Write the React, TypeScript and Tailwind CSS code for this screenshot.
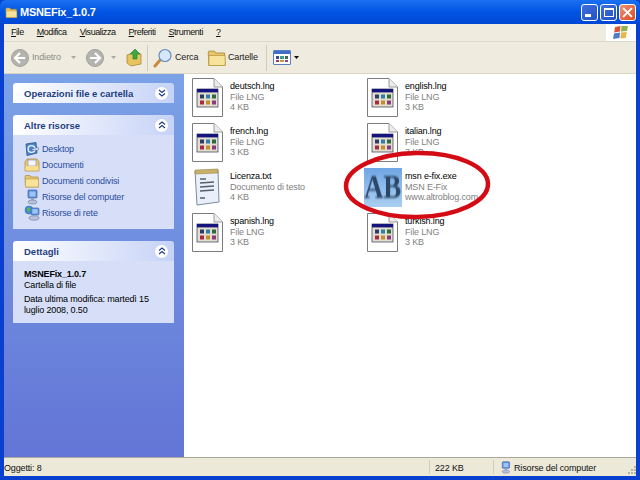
import React from 'react';

const Folder: React.FC<{ className?: string }> = ({ className }) => (
  <svg viewBox="0 0 16 16" className={className}>
    <path d="M1 4 L1.5 2.5 L6 2.5 L7 4 L14 4 L14.5 14 L1.5 14 Z" fill="#e8c66a" stroke="#a88a3a" strokeWidth="0.7" />
    <path d="M1.5 6 L14.5 6 L14.5 14 L1.5 14 Z" fill="#f8e39a" stroke="#b8983f" strokeWidth="0.6" />
  </svg>
);

const Computer: React.FC<{ className?: string }> = ({ className }) => (
  <svg viewBox="0 0 16 16" className={className}>
    <rect x="4" y="1" width="9" height="8" rx="1" fill="#5c8fe0" stroke="#3a5fa8" strokeWidth="0.7" />
    <rect x="5.5" y="2.5" width="6" height="5" fill="#9cc4f4" />
    <path d="M7 9 L10 9 L10 11 L7 11 Z" fill="#9aa8c8" />
    <ellipse cx="8.5" cy="13" rx="4.5" ry="2" fill="#b8c0dc" stroke="#6c7aa4" strokeWidth="0.6" />
  </svg>
);

const Network: React.FC<{ className?: string }> = ({ className }) => (
  <svg viewBox="0 0 16 16" className={className}>
    <circle cx="5" cy="5" r="4" fill="#3f8fd8" stroke="#2c5f9c" strokeWidth="0.5" />
    <path d="M3 3 L6 2.5 L7 5 L4 7 Z" fill="#5fb45a" />
    <rect x="7" y="3" width="8" height="7" rx="1" fill="#5c8fe0" stroke="#3a5fa8" strokeWidth="0.6" />
    <rect x="8.3" y="4.2" width="5.4" height="4.4" fill="#9cc4f4" />
    <ellipse cx="10" cy="13" rx="5" ry="2.2" fill="#b8c0dc" stroke="#6c7aa4" strokeWidth="0.6" />
  </svg>
);

const DesktopIcon: React.FC<{ className?: string }> = ({ className }) => (
  <svg viewBox="0 0 16 16" className={className}>
    <path d="M2 3 L12 1.5 L13 12 L3 14.5 Z" fill="#4f86c8" stroke="#2a4f8c" strokeWidth="0.8" />
    <circle cx="7.5" cy="8" r="3.4" fill="none" stroke="#e8f0fc" strokeWidth="1.4" />
    <path d="M8 8 L14.5 6.5 L14.5 9 L8 9.5 Z" fill="#dfe8f8" stroke="#2a4f8c" strokeWidth="0.4" />
  </svg>
);

const DocsIcon: React.FC<{ className?: string }> = ({ className }) => (
  <svg viewBox="0 0 16 16" className={className}>
    <path d="M1 5 L3 2 L13 2 L15 5 L15 14 L1 14 Z" fill="#edc968" stroke="#a88a3a" strokeWidth="0.7" />
    <rect x="4" y="3" width="8" height="6" fill="#f4f6fc" stroke="#7c8cb4" strokeWidth="0.6" />
    <path d="M1.5 9 L14.5 9 L14.5 13.5 L1.5 13.5 Z" fill="#f8df90" />
  </svg>
);

const LngIcon: React.FC = () => (
  <svg viewBox="0 0 31 39" className="w-[31px] h-[39px] shrink-0">
    <path d="M0.5 0.5 L22 0.5 L30.5 9 L30.5 38.5 L0.5 38.5 Z" fill="#fff" stroke="#7c7c7c" />
    <path d="M22 0.5 L22 9 L30.5 9" fill="#ececec" stroke="#9a9a9a" />
    <rect x="5" y="11" width="21" height="18" fill="#e4dfcc" stroke="#33335a" strokeWidth="0.7" />
    <rect x="5" y="11" width="21" height="3.4" fill="#14147c" />
    {[0, 1, 2].map((col) => (
      <React.Fragment key={col}>
        <rect x={8 + col * 6} y="16.5" width="4" height="4" fill={['#2d3a70', '#2f7fa8', '#2d6a40'][col]} />
        <rect x={8 + col * 6} y="22.5" width="4" height="4" fill={['#a82848', '#c09030', '#8a3a80'][col]} />
      </React.Fragment>
    ))}
  </svg>
);

const TxtIcon: React.FC = () => (
  <svg viewBox="0 0 31 39" className="w-[31px] h-[39px] shrink-0">
    <path d="M3 3 L26 2 L27 34 L5 37 Z" fill="#eaf0fa" stroke="#7c8aa0" />
    <path d="M3 2 L26 1 L26 5 L3 6 Z" fill="#c8b068" stroke="#8c7a40" strokeWidth="0.5" />
    <path d="M8 11 L14 11 M8 15 L22 14 M8 19 L22 18 M8 23 L22 22 M8 30 L13 30" stroke="#55606c" strokeWidth="1.4" />
  </svg>
);

const ABIcon: React.FC = () => (
  <div className="w-[38px] h-[39px] shrink-0 bg-gradient-to-b from-[#6fa6e4] via-[#8fbcec] to-[#a9cdf0] flex items-center justify-center overflow-hidden">
    <span className="font-['Liberation_Serif',serif] font-bold text-[27px] leading-none text-[#2b4666] scale-y-125 blur-[0.7px]">AB</span>
  </div>
);

const Chevron: React.FC<{ up?: boolean }> = ({ up }) => (
  <div className="w-[15px] h-[15px] rounded-full bg-white border border-[#c4cff0] flex items-center justify-center shrink-0">
    <svg viewBox="0 0 8 8" className={up ? 'w-2 h-2' : 'w-2 h-2 rotate-180'}>
      <path d="M1 3.5 L4 1 L7 3.5 M1 7 L4 4.5 L7 7" fill="none" stroke="#1c3a80" strokeWidth="1.1" />
    </svg>
  </div>
);

const PanelHeader: React.FC<{ title: string; up?: boolean }> = ({ title, up }) => (
  <div className="h-5 pl-[11px] pr-[5px] flex items-center justify-between rounded-t-[3px] bg-gradient-to-r from-white to-[#c6d3f7]">
    <span className="pt-[1px] font-bold text-[#1e3f80] text-[9.5px] tracking-[0px]">{title}</span>
    <Chevron up={up} />
  </div>
);

const tiles = [
  { name: 'deutsch.lng', kind: 'File LNG', size: '4 KB', icon: <LngIcon /> },
  { name: 'english.lng', kind: 'File LNG', size: '3 KB', icon: <LngIcon /> },
  { name: 'french.lng', kind: 'File LNG', size: '3 KB', icon: <LngIcon /> },
  { name: 'italian.lng', kind: 'File LNG', size: '3 KB', icon: <LngIcon /> },
  { name: 'Licenza.txt', kind: 'Documento di testo', size: '4 KB', icon: <TxtIcon /> },
  { name: 'msn e-fix.exe', kind: 'MSN E-Fix', size: 'www.altroblog.com', icon: <ABIcon /> },
  { name: 'spanish.lng', kind: 'File LNG', size: '3 KB', icon: <LngIcon /> },
  { name: 'turkish.lng', kind: 'File LNG', size: '3 KB', icon: <LngIcon /> },
];

const links = [
  { label: 'Desktop', icon: <DesktopIcon className="w-4 h-4" /> },
  { label: 'Documenti', icon: <DocsIcon className="w-4 h-4" /> },
  { label: 'Documenti condivisi', icon: <Folder className="w-4 h-4" /> },
  { label: 'Risorse del computer', icon: <Computer className="w-4 h-4" /> },
  { label: 'Risorse di rete', icon: <Network className="w-4 h-4" /> },
];

const menus = [
  ['F', 'ile'],
  ['M', 'odifica'],
  ['V', 'isualizza'],
  ['P', 'referiti'],
  ['S', 'trumenti'],
  ['?', ''],
];

const ArrowCircle: React.FC<{ flip?: boolean }> = ({ flip }) => (
  <svg viewBox="0 0 18 18" className={flip ? 'w-[18px] h-[18px] shrink-0 rotate-180' : 'w-[18px] h-[18px] shrink-0'}>
    <circle cx="9" cy="9" r="8.5" fill="#b4b4ae" stroke="#a0a09a" />
    <path d="M9 4 L4 9 L9 14 M4.5 9 L14 9" fill="none" stroke="#fff" strokeWidth="2.2" />
  </svg>
);

const DownTick: React.FC<{ dark?: boolean }> = ({ dark }) => (
  <svg viewBox="0 0 5 3" className="w-[5px] h-[3px] shrink-0">
    <path d="M0 0 L5 0 L2.5 3 Z" fill={dark ? '#111' : '#a8a8a2'} />
  </svg>
);

export default function App() {
  return (
    <div className="relative w-[640px] h-[480px] overflow-hidden flex flex-col bg-[#0a40d0] text-[9px] tracking-[-0.15px] leading-[11px] font-['Liberation_Sans',sans-serif]">
      {/* title bar */}
      <div className="h-6 shrink-0 pl-[5px] pr-[4px] flex items-center bg-gradient-to-b from-[#1a70f0] via-[#0254e4] to-[#0148d4] rounded-t-md">
        <Folder className="w-[13px] h-[13px] mr-[2px]" />
        <span className="flex-1 text-white font-bold text-[11px] tracking-[-0.2px]">MSNEFix_1.0.7</span>
        <div className="flex gap-[2px]">
          <div className="w-[17px] h-[17px] rounded-[3px] border border-white bg-gradient-to-br from-[#3f70e0] to-[#2550c0] flex items-end pl-[3px] pb-[3px]">
            <div className="w-[6px] h-[3px] bg-white" />
          </div>
          <div className="w-[17px] h-[17px] rounded-[3px] border border-white bg-gradient-to-br from-[#3f70e0] to-[#2550c0] flex items-center justify-center">
            <div className="w-[10px] h-[9px] border border-white border-t-2" />
          </div>
          <div className="w-[17px] h-[17px] rounded-[3px] border border-white bg-gradient-to-br from-[#f09070] to-[#d84a20] flex items-center justify-center">
            <svg viewBox="0 0 10 10" className="w-[11px] h-[11px]">
              <path d="M1 1 L9 9 M9 1 L1 9" stroke="#fff" strokeWidth="1.8" />
            </svg>
          </div>
        </div>
      </div>

      <div className="flex-1 min-h-0 mx-[4px] mb-[4px] flex flex-col">
        {/* menu bar */}
        <div className="h-[18px] shrink-0 flex bg-[#efecdf] border-b border-[#dcd9c8]">
          <div className="flex-1 flex items-center pl-[7px] gap-[13px] text-[#111] tracking-[-0.45px]">
            {menus.map(([first, rest]) => (
              <span key={first}>
                <span className="underline">{first}</span>
                {rest}
              </span>
            ))}
          </div>
          <div className="w-[30px] bg-white flex items-center justify-center">
            <svg viewBox="0 0 16 15" className="w-[16px] h-[15px]">
              <path d="M2 2 L7.5 1 L7 6.5 L1.2 7.5 Z" fill="#d8553a" />
              <path d="M8.5 1 L15 1 L14 6 L8 6.5 Z" fill="#8cb44a" />
              <path d="M1 8.5 L7 7.5 L6.5 13 L0 14 Z" fill="#4f7cc4" />
              <path d="M8 7.5 L13.8 7 L13 13 L7.4 13.6 Z" fill="#e8b84a" />
            </svg>
          </div>
        </div>

        {/* toolbar */}
        <div className="h-8 shrink-0 flex items-center pl-[7px] bg-[#efecdf] border-b border-[#d8d5c4] text-[#222]">
          <ArrowCircle />
          <span className="ml-[3px] w-[31px] text-[#8c8c86]">Indietro</span>
          <span className="ml-[8px]"><DownTick /></span>
          <span className="ml-[10px]"><ArrowCircle flip /></span>
          <span className="ml-[7px]"><DownTick /></span>
          <svg viewBox="0 0 17 19" className="ml-[10px] w-[17px] h-[19px] shrink-0">
            <path d="M1 7 L7 5 L15 6 L15 16 L5 18 L1 15 Z" fill="#e8c460" stroke="#a08030" strokeWidth="0.7" />
            <path d="M9 1 L14 6 L11 6 L11 11 L7 11 L7 6 L4 6 Z" fill="#3ea83e" stroke="#1c7c2c" strokeWidth="0.6" />
          </svg>
          <div className="ml-[4px] w-px h-[26px] bg-[#cfccba]" />
          <svg viewBox="0 0 20 20" className="ml-[5px] w-5 h-5 shrink-0">
            <path d="M8 11 L2 18" stroke="#c88a3c" strokeWidth="3" strokeLinecap="round" />
            <circle cx="12" cy="7.5" r="6" fill="#d4e8fa" stroke="#6a8cc0" strokeWidth="1.2" />
          </svg>
          <span className="ml-[2px] w-[22px]">Cerca</span>
          <Folder className="ml-[10px] w-5 h-5 shrink-0" />
          <span className="ml-[1px] w-[30px]">Cartelle</span>
          <div className="ml-[8px] w-px h-[26px] bg-[#cfccba]" />
          <div className="ml-[6px] w-[18px] h-[15px] shrink-0 rounded-[1px] border border-[#5a7fc0] bg-white flex flex-col">
            <div className="h-[3px] bg-[#3f6fc8]" />
            <div className="flex-1 grid grid-cols-3 gap-[1px] p-[2px]">
              <div className="bg-[#3d4a80]" />
              <div className="bg-[#3f9f90]" />
              <div className="bg-[#3d6a50]" />
              <div className="bg-[#a03858]" />
              <div className="bg-[#c0a040]" />
              <div className="bg-[#8a4a80]" />
            </div>
          </div>
          <span className="ml-[3px]"><DownTick dark /></span>
        </div>

        {/* body */}
        <div className="flex-1 min-h-0 flex bg-white border-b border-[#aca899]">
          <div className="w-[180px] shrink-0 pt-[9px] pl-[9px] pr-[10px] bg-gradient-to-b from-[#7ba2e7] to-[#6375d6]">
            <PanelHeader title="Operazioni file e cartella" />
            <div className="mt-3">
              <PanelHeader title="Altre risorse" up />
              <div className="h-[94px] pt-[6px] pl-[11px] bg-[#d6dff7]">
                {links.map((link) => (
                  <div key={link.label} className="h-4 flex items-center gap-[2px] text-[#2a4ba0]">
                    {link.icon}
                    <span>{link.label}</span>
                  </div>
                ))}
              </div>
            </div>
            <div className="mt-3">
              <PanelHeader title="Dettagli" up />
              <div className="h-[62px] pt-[8px] pl-[11px] bg-[#d6dff7] text-black">
                <div className="font-bold">MSNEFix_1.0.7</div>
                <div>Cartella di file</div>
                <div className="mt-[3px] leading-[11px] w-[135px]">Data ultima modifica: martedì 15 luglio 2008, 0.50</div>
              </div>
            </div>
          </div>

          <div className="relative flex-1 pt-[4px] pl-[8px]">
            <div className="grid grid-cols-[175px_175px] auto-rows-[45px]">
              {tiles.map((tile) => (
                <div key={tile.name} className="flex items-start gap-[7px]">
                  <div className="w-[31px] flex justify-center">{tile.icon}</div>
                  <div className="pt-[3px] leading-[10.5px] whitespace-nowrap">
                    <div className="text-black">{tile.name}</div>
                    <div className="text-[#7f7f7f]">{tile.kind}</div>
                    <div className="text-[#7f7f7f]">{tile.size}</div>
                  </div>
                </div>
              ))}
            </div>
          </div>
        </div>

        {/* status bar */}
        <div className="h-[18px] shrink-0 flex items-center bg-[#ece9d8] text-[#111]">
          <span className="w-[425px] pt-[3px]">Oggetti: 8</span>
          <div className="w-px h-[14px] bg-[#cfccba]" />
          <span className="w-[63px] pl-[5px] pt-[3px]">222 KB</span>
          <div className="w-px h-[14px] bg-[#cfccba]" />
          <Computer className="ml-[5px] w-[13px] h-[15px]" />
          <span className="ml-[2px] flex-1 pt-[3px]">Risorse del computer</span>
          <svg viewBox="0 0 10 10" className="w-[10px] h-[10px] mt-[6px] shrink-0">
            <path d="M8 1 h2 v2 h-2 Z M5 4 h2 v2 h-2 Z M8 4 h2 v2 h-2 Z M2 7 h2 v2 h-2 Z M5 7 h2 v2 h-2 Z M8 7 h2 v2 h-2 Z" fill="#b8b5a4" />
          </svg>
        </div>
      </div>

      {/* red marker ring drawn over the window */}
      <svg viewBox="0 0 640 480" className="absolute inset-0 w-[640px] h-[480px] pointer-events-none">
        <ellipse cx="417" cy="185" rx="71" ry="32" fill="none" stroke="#d40a14" strokeWidth="4.5" transform="rotate(-1 417 185)" />
      </svg>
    </div>
  );
}
